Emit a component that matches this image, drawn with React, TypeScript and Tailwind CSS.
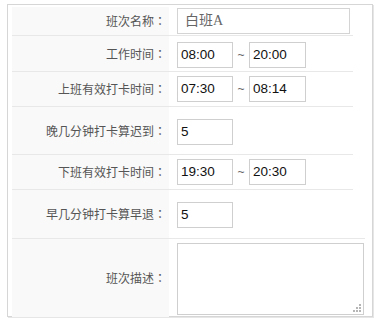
import React from "react";

const labelFont = { fontFamily: '"Noto Sans CJK SC", "Noto Sans", sans-serif' };

function Label({ text }: { text: string }) {
  return (
    <div
      className="w-[157px] shrink-0 self-stretch bg-[#f9f9f9] flex items-center justify-end pr-[3px] text-[12px] text-[#555]"
      style={labelFont}
    >
      <span>{text}</span>
      <span
        className="inline-block w-[12px] text-center"
        style={{ fontFamily: '"Noto Sans CJK TC", "Noto Sans", sans-serif' }}
      >
        ：
      </span>
    </div>
  );
}

function Box({ value, w }: { value: string; w: string }) {
  return (
    <div
      className={`${w} h-[26px] border border-[#cfcfcf] bg-white flex items-center pl-[3px] text-[13.5px] text-[#111] leading-none`}
      style={{ fontFamily: '"Liberation Sans", Arial, sans-serif' }}
    >
      {value}
    </div>
  );
}

function TimeRange({ a, b }: { a: string; b: string }) {
  return (
    <div className="flex items-center">
      <Box value={a} w="w-[56px]" />
      <span
        className="w-[16px] text-center text-[12px] text-[#666] leading-none"
        style={{ fontFamily: '"Liberation Sans", Arial, sans-serif' }}
      >
        ~
      </span>
      <Box value={b} w="w-[57px]" />
    </div>
  );
}

function Row({
  label,
  h,
  children,
  border = true,
}: {
  label: string;
  h: string;
  children: React.ReactNode;
  border?: boolean;
}) {
  return (
    <div className={`flex w-[341px] ${h} ${border ? "border-b border-[#e8e8e8]" : ""}`}>
      <Label text={label} />
      <div className="flex-1 flex items-center pl-[8px]">{children}</div>
    </div>
  );
}

export default function App() {
  return (
    <div className="bg-white w-[383px] h-[327px] pt-[4px] pl-[7px]">
      <div className="w-[366px] h-[313px] border border-[#d6d6d6] shadow-[1px_1px_0_#e6e6e6] pl-[4px] pt-[2px]">
        <Row label="班次名称" h="h-[29px]">
          <div
            className="w-[173px] h-[26px] border border-[#d4d4d4] bg-white flex items-center pl-[7px] text-[14px] text-[#666] leading-none"
            style={{ fontFamily: '"Liberation Serif", "Noto Sans CJK SC", serif' }}
          >
            白班A
          </div>
        </Row>
        <Row label="工作时间" h="h-[36px]">
          <div className="pt-[2px]">
            <TimeRange a="08:00" b="20:00" />
          </div>
        </Row>
        <Row label="上班有效打卡时间" h="h-[35px]">
          <TimeRange a="07:30" b="08:14" />
        </Row>
        <Row label="晚几分钟打卡算迟到" h="h-[48px]">
          <div className="pt-[2px]">
            <Box value="5" w="w-[56px]" />
          </div>
        </Row>
        <Row label="下班有效打卡时间" h="h-[35px]">
          <TimeRange a="19:30" b="20:30" />
        </Row>
        <Row label="早几分钟打卡算早退" h="h-[48px]" border={false}>
          <div className="pt-[2px]">
            <Box value="5" w="w-[56px]" />
          </div>
        </Row>
        <div className="flex w-[353px] h-[79px] border-t border-[#e8e8e8]">
          <Label text="班次描述" />
          <div className="flex-1 pl-[8px] pt-[4px]">
            <div className="relative w-[187px] h-[72px] border border-[#cfcfcf] bg-white">
              <svg
                className="absolute right-[1px] bottom-[1px]"
                width="10"
                height="10"
                viewBox="0 0 10 10"
              >
                <rect x="7" y="1" width="2" height="2" fill="#b5b5b5" />
                <rect x="4" y="4" width="2" height="2" fill="#b5b5b5" />
                <rect x="7" y="4" width="2" height="2" fill="#b5b5b5" />
                <rect x="1" y="7" width="2" height="2" fill="#b5b5b5" />
                <rect x="4" y="7" width="2" height="2" fill="#b5b5b5" />
                <rect x="7" y="7" width="2" height="2" fill="#b5b5b5" />
              </svg>
            </div>
          </div>
        </div>
      </div>
    </div>
  );
}
